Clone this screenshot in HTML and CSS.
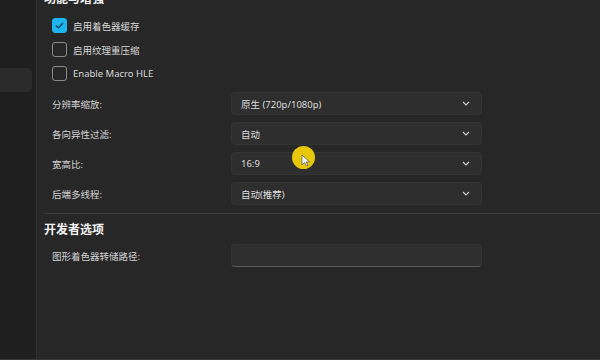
FILE: index.html
```html
<!DOCTYPE html>
<html lang="zh-CN">
<head>
  <meta charset="UTF-8" />
  <title>图形设置</title>
  <link rel="stylesheet" href="styles.css">
</head>
<body>
  <div class="window">
    <aside class="sidebar">
      <div class="side-item"></div>
      <div class="side-item active"></div>
    </aside>

    <main class="content">
      <h2 class="section-title">功能与增强</h2>
      <div class="checks">
        <label class="check">
          <span class="box checked">
            <svg width="9" height="7" viewBox="0 0 9 7"><polyline points="1,3.5 3.5,6 8,1" fill="none" stroke="#10384a" stroke-width="1.2"/></svg>
          </span>
          启用着色器缓存
        </label>
        <label class="check"><span class="box"></span>启用纹理重压缩</label>
        <label class="check"><span class="box"></span>Enable Macro HLE</label>
      </div>

      <div class="rows">
        <div class="row">
          <span class="row-label">分辨率缩放:</span>
          <div class="select">原生 (720p/1080p)<svg class="chev" width="8" height="5" viewBox="0 0 8 5"><polyline points="1,1 4,4 7,1" fill="none" stroke="#cfcfcf" stroke-width="1.1"/></svg></div>
        </div>
        <div class="row">
          <span class="row-label">各向异性过滤:</span>
          <div class="select">自动<svg class="chev" width="8" height="5" viewBox="0 0 8 5"><polyline points="1,1 4,4 7,1" fill="none" stroke="#cfcfcf" stroke-width="1.1"/></svg></div>
        </div>
        <div class="row">
          <span class="row-label">宽高比:</span>
          <div class="select">16:9<svg class="chev" width="8" height="5" viewBox="0 0 8 5"><polyline points="1,1 4,4 7,1" fill="none" stroke="#cfcfcf" stroke-width="1.1"/></svg></div>
        </div>
        <div class="row">
          <span class="row-label">后端多线程:</span>
          <div class="select">自动(推荐)<svg class="chev" width="8" height="5" viewBox="0 0 8 5"><polyline points="1,1 4,4 7,1" fill="none" stroke="#cfcfcf" stroke-width="1.1"/></svg></div>
        </div>
      </div>

      <hr class="divider">

      <h2 class="section-title dev">开发者选项</h2>
      <div class="rows">
        <div class="row">
          <span class="row-label">图形着色器转储路径:</span>
          <div class="text-input"></div>
        </div>
      </div>
    </main>
  </div>

  <div class="cursor">
    <svg width="10" height="13" viewBox="0 0 10 13"><path d="M1 1 L1 11 L3.5 8.5 L5.5 12 L7 11.3 L5 8 L8.5 8 Z" fill="#f4f4f4" stroke="#555" stroke-width="0.7"/></svg>
  </div>
</body>
</html>
```

FILE: styles.css
```css
* { box-sizing: border-box; }
body {
  margin: 0;
  width: 600px;
  height: 360px;
  overflow: hidden;
  background: #272727;
  color: #d6d6d6;
  font-family: "Noto Sans", "Noto Sans CJK SC", sans-serif;
  position: relative;
}
.window { display: flex; height: 360px; border-bottom: 1px solid #3a3a3a; }
.sidebar {
  width: 37px;
  flex-shrink: 0;
  background: #1f1f1f;
  border-right: 1px solid #313131;
  padding-top: 35px;
  display: flex;
  flex-direction: column;
  gap: 9px;
}
.side-item { height: 24px; width: 32px; border-radius: 0 4px 4px 0; }
.side-item.active { background: #2b2b2b; }

.content { flex: 1; padding-left: 7px; margin-top: -9px; }
.section-title {
  margin: 0;
  font-size: 12px;
  line-height: 16px;
  font-weight: 700;
  color: #f2f2f2;
}
.section-title.dev { margin-top: 8px; }

.checks { padding: 11px 0 0 8px; display: flex; flex-direction: column; gap: 9px; }
.check { display: flex; align-items: center; gap: 6px; height: 15px; font-size: 9.5px; color: #d8d8d8; }
.box {
  width: 15px;
  height: 15px;
  border: 1px solid #8a8a8a;
  border-radius: 3px;
  display: flex;
  align-items: center;
  justify-content: center;
}
.box.checked { background: #1cb5f0; border-color: #1cb5f0; }

.rows { margin-top: 11px; display: flex; flex-direction: column; gap: 7px; }
.row { display: flex; align-items: center; padding-left: 8px; height: 23px; }
.row-label { width: 179px; font-size: 9.5px; color: #d2d2d2; }
.select {
  width: 251px;
  height: 23px;
  background: #2e2e2e;
  border: 1px solid #333;
  border-radius: 4px;
  display: flex;
  align-items: center;
  padding: 0 11px 0 9px;
  font-size: 9.5px;
  color: #dcdcdc;
}
.chev { margin-left: auto; }

.divider { border: 0; border-top: 1px solid #3b3b3b; margin: 8px 0 0; }
.dev + .rows { margin-top: 6px; }
.text-input {
  width: 251px;
  height: 23px;
  background: #2f2f2f;
  border: 1px solid #333;
  border-bottom: 1px solid #5a5a5a;
  border-radius: 4px;
}

.cursor {
  position: absolute;
  left: 292px;
  top: 146px;
  width: 23px;
  height: 23px;
  border-radius: 50%;
  background: #e6c70c;
  padding: 8px 0 0 9px;
}
.cursor svg { display: block; }
```
